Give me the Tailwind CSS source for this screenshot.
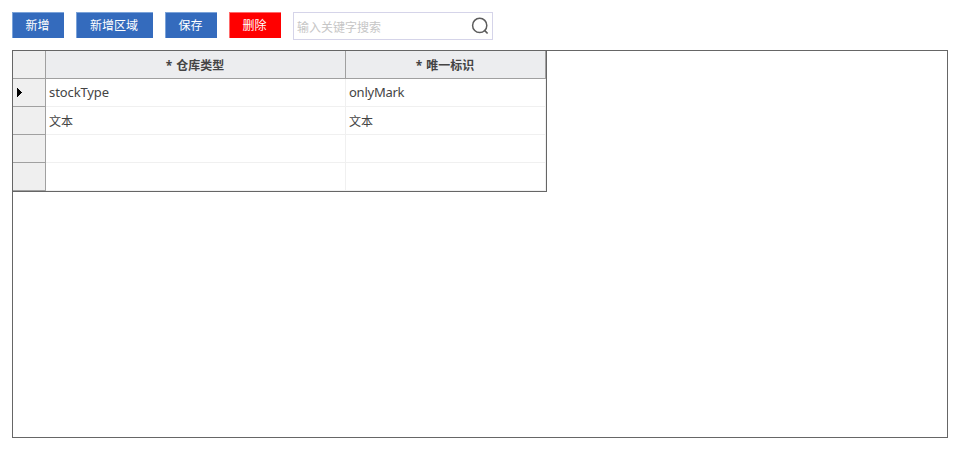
<!DOCTYPE html>
<html lang="zh-CN">
<head>
<meta charset="utf-8">
<title>仓库类型</title>
<script src="https://cdn.jsdelivr.net/npm/@tailwindcss/browser@4"></script>
</head>
<body class="h-[450px] overflow-hidden bg-white p-3 font-['Noto_Sans','Noto_Sans_CJK_SC',sans-serif] text-xs text-[#444]">
<div class="flex h-full flex-col">
  <div class="flex h-[38px] items-start gap-3 font-['Noto_Sans_CJK_SC',sans-serif]">
    <button class="h-[26px] w-[52px] border-t border-l border-[#7ba3d9] bg-[#346bbd] pr-[2px] pb-px leading-[24px] text-white">新增</button>
    <button class="h-[26px] w-[77px] border-t border-l border-[#7ba3d9] bg-[#346bbd] pr-[2px] pb-px leading-[24px] text-white">新增区域</button>
    <button class="h-[26px] w-[52px] border-t border-l border-[#7ba3d9] bg-[#346bbd] pr-[2px] pb-px leading-[24px] text-white">保存</button>
    <button class="h-[26px] w-[52px] border-t border-l border-[#ff6b6b] bg-[#ff0000] pr-[2px] pb-px leading-[24px] text-white">删除</button>
    <div class="flex h-7 w-[200px] items-center justify-between border border-[#d5d4e9] pr-[3px] pl-[3px]">
      <span class="pt-px leading-[26px] text-[#c6c6c6]">输入关键字搜索</span>
      <svg class="h-[18px] w-[18px]" viewBox="0 0 18 18" fill="none" stroke="#5c5c5c" stroke-width="1.5"><circle cx="8.7" cy="8.4" r="7.1"/><path d="M13.3 13.2l3.3 3.3" stroke-width="1.7"/></svg>
    </div>
  </div>
  <div class="flex h-[388px] w-[936px] items-start border border-[#666]">
    <div class="box-border grid h-[141px] w-[534px] grid-cols-[33px_300px_200px] grid-rows-[repeat(5,28px)] border-r border-b border-[#666]">
      <div class="border-r border-b border-[#a0a0a0] bg-[#efefef]"></div>
      <div class="border-r border-b border-[#a0a0a0] bg-[#ecedef] pt-px pr-px text-center leading-[27px] font-bold">*<span class="ml-1">仓库类型</span></div>
      <div class="border-r border-b border-[#a0a0a0] bg-[#ecedef] pt-px pr-px text-center leading-[27px] font-bold">*<span class="ml-1">唯一标识</span></div>

      <div class="flex items-center border-r border-b border-[#a0a0a0] bg-[#efefef] pl-1"><svg class="h-[9px] w-[5px]" viewBox="0 0 5 9" shape-rendering="crispEdges"><path d="M0 0h1v1h1v1h1v1h1v1h1v1h-1v1h-1v1h-1v1h-1v1h-1z" fill="#000"/></svg></div>
      <div class="border-r border-b border-[#f0f0f0] pl-[3px] text-[13px] leading-[27px] tracking-[-0.1px]">stockType</div>
      <div class="border-r border-b border-[#f0f0f0] pl-[3px] text-[13px] leading-[27px] tracking-[-0.25px]">onlyMark</div>

      <div class="border-r border-b border-[#a0a0a0] bg-[#efefef]"></div>
      <div class="border-r border-b border-[#f0f0f0] pt-px pl-[3px] leading-[27px]">文本</div>
      <div class="border-r border-b border-[#f0f0f0] pt-px pl-[3px] leading-[27px]">文本</div>

      <div class="border-r border-b border-[#a0a0a0] bg-[#efefef]"></div>
      <div class="border-r border-b border-[#f0f0f0]"></div>
      <div class="border-r border-b border-[#f0f0f0]"></div>

      <div class="border-r border-b border-[#a0a0a0] bg-[#efefef]"></div>
      <div class="border-r border-b border-[#f0f0f0]"></div>
      <div class="border-r border-b border-[#f0f0f0]"></div>
    </div>
  </div>
</div>
</body>
</html>
